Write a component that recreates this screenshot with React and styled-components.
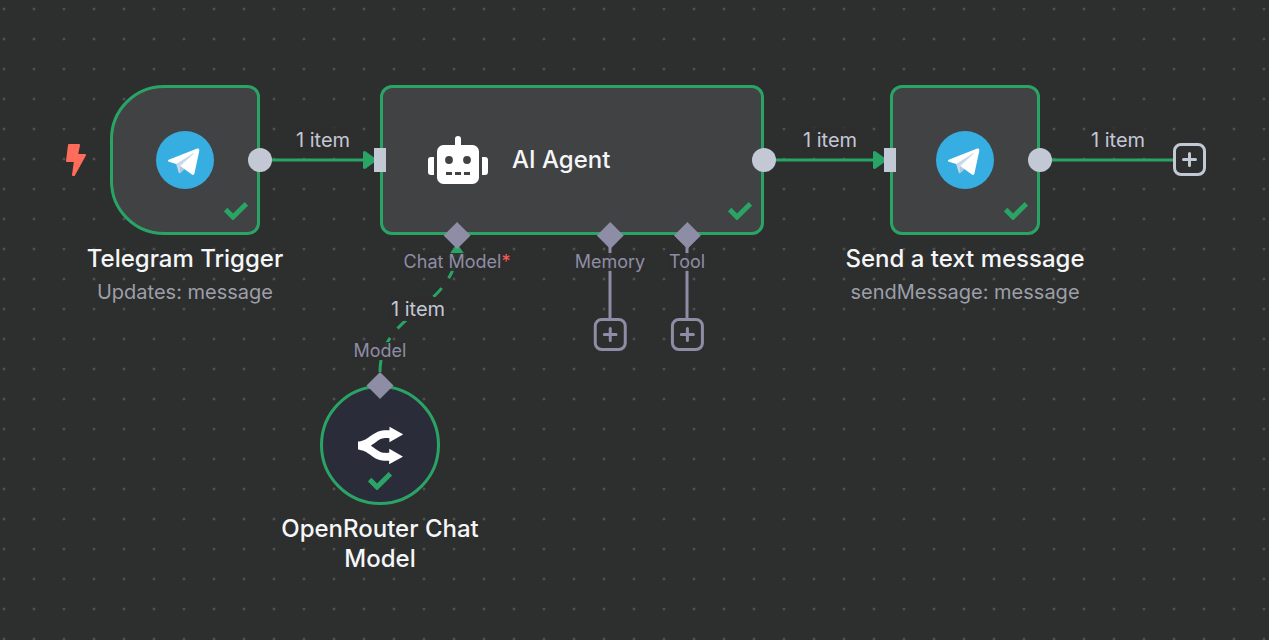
import React from "react";
import styled, { createGlobalStyle, css } from "styled-components";

const color = {
  canvas: "#2d2e2e",
  dot: "#606161",
  node: "#414244",
  modelNode: "#2b2c3a",
  success: "#2aa465",
  port: "#c3c8d5",
  aiPort: "#8d8da6",
  title: "#f5f6f8",
  subtitle: "#9c9fa8",
  edgeText: "#c3c8d5",
  danger: "#ff6d5a",
};

const GlobalStyle = createGlobalStyle`
  * { box-sizing: border-box; }
  body {
    margin: 0;
    background: ${color.canvas};
    font-family: Inter, "Liberation Sans", sans-serif;
  }
`;

const Canvas = styled.main`
  position: relative;
  min-height: 100vh;
  overflow: hidden;
  background-color: ${color.canvas};
  background-image: radial-gradient(circle at 4px 9px, ${color.dot} 0, transparent 2px);
  background-size: 30px 30px;
`;

const Edges = styled.svg`
  position: absolute;
  inset: 0;
  width: 100%;
  height: 100%;
  fill: none;
  stroke-width: 3;
`;

const Node = styled.article`
  position: absolute;
  left: ${(p) => p.$x}px;
  top: ${(p) => p.$y}px;
  width: ${(p) => p.$width}px;
  display: flex;
  flex-direction: column;
  align-items: center;
`;

const shapes = {
  square: css`
    height: 150px;
    border-radius: 12px;
  `,
  trigger: css`
    height: 150px;
    border-radius: 54px 12px 12px 54px;
  `,
  agent: css`
    height: 150px;
    border-radius: 12px;
    justify-content: flex-start;
    gap: 24px;
    padding-left: 45px;
  `,
  circle: css`
    height: 120px;
    border-radius: 50%;
    background: ${color.modelNode};
  `,
};

const NodeBody = styled.div`
  position: relative;
  width: 100%;
  display: flex;
  align-items: center;
  justify-content: center;
  border: 3px solid ${color.success};
  background: ${color.node};
  ${(p) => shapes[p.$shape]}
`;

const Caption = styled.div`
  display: flex;
  flex-direction: column;
  align-items: center;
  gap: 3px;
  width: 240px;
  margin-top: 9px;
  text-align: center;
`;

const Title = styled.h2`
  margin: 0;
  font-size: 24px;
  font-weight: 500;
  line-height: 30px;
  color: ${color.title};
`;

const Subtitle = styled.p`
  margin: 0;
  font-size: 20px;
  line-height: 30px;
  white-space: nowrap;
  color: ${color.subtitle};
`;

const Status = styled.svg`
  position: absolute;
  width: 24px;
  height: 18px;
  bottom: 12px;
  right: ${(p) => (p.$centered ? "45px" : "9px")};
  fill: none;
  stroke: ${color.success};
  stroke-width: 5;
`;

const Bolt = styled.svg`
  position: absolute;
  right: 100%;
  margin: 0 27px 0 0;
  width: 20px;
  height: 32px;
  fill: ${color.danger};
  stroke: ${color.danger};
  stroke-width: 2;
  stroke-linejoin: round;
`;

const OutPort = styled.span`
  position: absolute;
  right: -15px;
  width: 24px;
  height: 24px;
  border-radius: 50%;
  background: ${color.port};
`;

const InPort = styled.span`
  position: absolute;
  left: -9px;
  width: 12px;
  height: 24px;
  background: ${color.port};
`;

const AiPort = styled.div`
  position: absolute;
  left: ${(p) => p.$x}px;
  transform: translateX(-50%);
  display: flex;
  flex-direction: column;
  align-items: center;
  ${(p) => (p.$above ? "top: -43px; gap: 16px;" : "top: 141px; gap: 8px;")}
`;

const Diamond = styled.span`
  width: 19px;
  height: 19px;
  background: ${color.aiPort};
  transform: rotate(45deg);
`;

const PortLabel = styled.span`
  font-size: 18px;
  line-height: 18px;
  white-space: nowrap;
  color: ${color.aiPort};
  background: rgba(45, 46, 46, 0.9);
`;

const Required = styled.span`
  color: #ff5a5a;
`;

const EdgeLabel = styled.span`
  position: absolute;
  left: ${(p) => p.$x}px;
  top: ${(p) => p.$y}px;
  transform: translate(-50%, -50%);
  font-size: 20px;
  line-height: 24px;
  white-space: nowrap;
  color: ${color.edgeText};
  background: rgba(45, 46, 46, 0.9);
`;

const AddButton = styled.button`
  width: 33px;
  height: 33px;
  padding: 0;
  display: grid;
  place-items: center;
  border: 3px solid currentColor;
  border-radius: 8px;
  background: ${color.canvas};
  color: ${(p) => (p.$ai ? color.aiPort : color.port)};
  cursor: pointer;
`;

const PortAdd = styled.div`
  margin-top: 39px;
`;

const OutputAdd = styled.div`
  position: absolute;
  left: ${(p) => p.$x}px;
  top: ${(p) => p.$y}px;
`;

function Check({ centered }) {
  return (
    <Status $centered={centered} viewBox="0 0 24 18" aria-label="Success">
      <path d="M1.6 7.6 L9 15 L22.4 1.9" />
    </Status>
  );
}

function Add({ ai, label }) {
  return (
    <AddButton $ai={ai} aria-label={label}>
      <svg width="15" height="15" viewBox="0 0 15 15" stroke="currentColor" strokeWidth="3" strokeLinecap="round">
        <path d="M7.500 1.500V13.500M1.500 7.500H13.500" />
      </svg>
    </AddButton>
  );
}

function AiInput({ x, children, addLabel }) {
  return (
    <AiPort $x={x}>
      <Diamond />
      <PortLabel>{children}</PortLabel>
      {addLabel && (
        <PortAdd>
          <Add ai label={addLabel} />
        </PortAdd>
      )}
    </AiPort>
  );
}

function TelegramIcon() {
  return (
    <svg width="58" height="58" viewBox="0 0 240 240" aria-hidden="true">
      <circle cx="120" cy="120" r="120" fill="#37aee2" />
      <path fill="#c8daea" d="M98 175c-3.888 0-3.227-1.468-4.568-5.17L82 132.207 170 80" />
      <path fill="#a9c9dd" d="M98 175c3 0 4.325-1.372 6-3l16-15.558-19.958-12.035" />
      <path
        fill="#fff"
        d="M100.04 144.41l48.36 35.729c5.519 3.045 9.501 1.468 10.876-5.123l19.685-92.763c2.015-8.08-3.08-11.746-8.36-9.349l-115.59 44.571c-7.89 3.165-7.843 7.567-1.438 9.528l29.663 9.259 68.673-43.325c3.242-1.966 6.218-.91 3.776 1.258"
      />
    </svg>
  );
}

function RobotIcon() {
  return (
    <svg width="60" height="48" viewBox="0 0 60 48" aria-hidden="true">
      <g fill="#fff">
        <path d="M6 21v18H3a3 3 0 0 1-3-3V24a3 3 0 0 1 3-3zM54 21v18h3a3 3 0 0 0 3-3V24a3 3 0 0 0-3-3z" />
        <path d="M27 9V3a3 3 0 0 1 6 0v6h11.500a6.500 6.500 0 0 1 6.500 6.500v26a6.500 6.500 0 0 1-6.500 6.500h-29A6.500 6.500 0 0 1 9 41.500v-26A6.500 6.500 0 0 1 15.500 9z" />
      </g>
      <g fill={color.node}>
        <circle cx="21" cy="24" r="3.900" />
        <circle cx="39" cy="24" r="3.900" />
        <path d="M18 36h6v3h-6zM27 36h6v3h-6zM36 36h6v3h-6z" />
      </g>
    </svg>
  );
}

function OpenRouterIcon() {
  return (
    <svg width="45" height="45" viewBox="0 0 24 24" fill="#fff" aria-hidden="true">
      <path d="M16.804 1.957l7.22 4.105v.087L16.73 10.21l.017-2.117-.821-.03c-1.059-.028-1.611.002-2.268.11-1.064.175-2.038.577-3.147 1.352L8.345 11.03c-.284.195-.495.336-.68.455l-.515.322-.397.234.385.23.53.338c.476.314 1.17.796 2.701 1.866 1.11.775 2.083 1.177 3.147 1.352l.3.045c.694.091 1.375.094 2.825.033l.022-2.159 7.22 4.105v.087L16.589 22l.014-1.862-.635.022c-1.386.042-2.137.002-3.138-.162-1.694-.28-3.26-.926-4.881-2.059l-2.158-1.5a21.997 21.997 0 00-.755-.498l-.467-.28a55.927 55.927 0 00-.76-.43C2.908 14.73.563 14.116 0 14.116V9.888l.14.004c.564-.007 2.91-.622 3.809-1.124l1.016-.58.438-.274c.428-.28 1.072-.726 2.686-1.853 1.621-1.133 3.186-1.78 4.881-2.059 1.152-.19 1.974-.213 3.814-.138l.02-1.907z" />
    </svg>
  );
}

export default function App() {
  return (
    <>
      <GlobalStyle />
      <Canvas>
        <Edges aria-hidden="true">
          <defs>
            <marker id="arrow" markerUnits="userSpaceOnUse" markerWidth="20" markerHeight="24" refX="14" refY="12" orient="auto">
              <path d="M3.500 4.500L14 12L3.500 19.500z" fill={color.success} stroke={color.success} strokeWidth="3" strokeLinejoin="round" />
            </marker>
          </defs>
          <g stroke={color.success}>
            <path d="M260 160H375" markerEnd="url(#arrow)" />
            <path d="M764 160H885" markerEnd="url(#arrow)" />
            <path d="M1040 160H1174" />
            <path d="M380 372C380 310 457 310 457 246" strokeDasharray="12 12" markerEnd="url(#arrow)" />
          </g>
          <path stroke={color.aiPort} d="M610 235V319M687 235V319" />
        </Edges>

        <EdgeLabel $x={323} $y={140}>1 item</EdgeLabel>
        <EdgeLabel $x={830} $y={140}>1 item</EdgeLabel>
        <EdgeLabel $x={1118} $y={140}>1 item</EdgeLabel>
        <EdgeLabel $x={418} $y={309}>1 item</EdgeLabel>

        <Node $x={110} $y={85} $width={150}>
          <NodeBody $shape="trigger">
            <Bolt viewBox="0 0 20 32" aria-label="Trigger">
              <path d="M3 1H13L11 11H19L8 31H7L9 17H1z" />
            </Bolt>
            <TelegramIcon />
            <Check />
            <OutPort />
          </NodeBody>
          <Caption>
            <Title>Telegram Trigger</Title>
            <Subtitle>Updates: message</Subtitle>
          </Caption>
        </Node>

        <Node $x={380} $y={85} $width={384}>
          <NodeBody $shape="agent">
            <RobotIcon />
            <Title>AI Agent</Title>
            <Check />
            <InPort />
            <OutPort />
          </NodeBody>
          <AiInput x={77}>
            Chat Model<Required>*</Required>
          </AiInput>
          <AiInput x={230} addLabel="Add memory">Memory</AiInput>
          <AiInput x={307} addLabel="Add tool">Tool</AiInput>
        </Node>

        <Node $x={890} $y={85} $width={150}>
          <NodeBody $shape="square">
            <TelegramIcon />
            <Check />
            <InPort />
            <OutPort />
          </NodeBody>
          <Caption>
            <Title>Send a text message</Title>
            <Subtitle>sendMessage: message</Subtitle>
          </Caption>
        </Node>

        <Node $x={320} $y={385} $width={120}>
          <NodeBody $shape="circle">
            <OpenRouterIcon />
            <Check centered />
          </NodeBody>
          <AiPort $x={60} $above>
            <PortLabel>Model</PortLabel>
            <Diamond />
          </AiPort>
          <Caption>
            <Title>OpenRouter Chat Model</Title>
          </Caption>
        </Node>

        <OutputAdd $x={1173} $y={143}>
          <Add label="Add next step" />
        </OutputAdd>
      </Canvas>
    </>
  );
}
